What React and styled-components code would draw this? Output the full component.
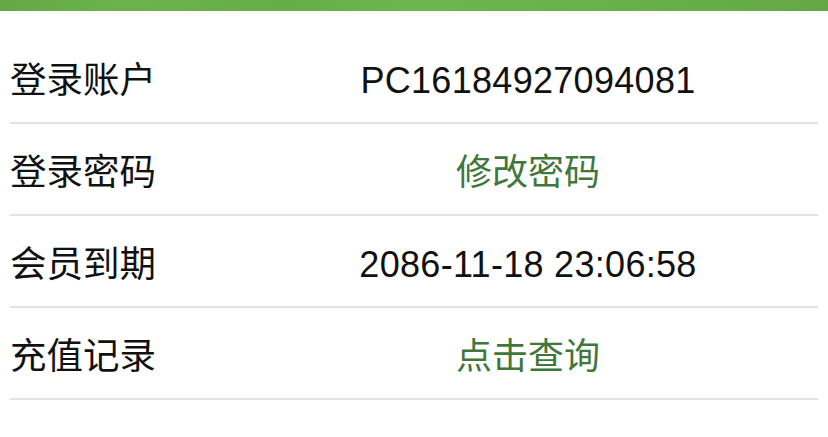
import React from "react";
import styled, { createGlobalStyle } from "styled-components";

const GlobalStyle = createGlobalStyle`
  html, body {
    margin: 0;
    padding: 0;
    background: #ffffff;
  }
  body {
    font-family: "Liberation Sans", "Noto Sans CJK SC", sans-serif;
  }
`;

const rows = [
  { label: "登录账户", value: "PC16184927094081" },
  { label: "登录密码", value: "修改密码", link: true },
  { label: "会员到期", value: "2086-11-18 23:06:58" },
  { label: "充值记录", value: "点击查询", link: true },
];

const App = () => {
  return (
    <Page>
      <GlobalStyle />
      <TopBar />
      <List>
        {rows.map((row, i) => (
          <Row key={i}>
            <Label>{row.label}</Label>
            <Value link={row.link ? 1 : 0}>{row.value}</Value>
          </Row>
        ))}
      </List>
    </Page>
  );
};

const Page = styled.div`
  width: 828px;
  height: 437px;
  overflow: hidden;
  background: #fff;
`;

const TopBar = styled.div`
  height: 11px;
  background: linear-gradient(
    100deg,
    #64a845 0%,
    #6cb34c 15%,
    #66ad47 35%,
    #6db64e 50%,
    #68b049 75%,
    #64a845 100%
  );
`;

const List = styled.div`
  display: flex;
  flex-direction: column;
  padding: 21px 10px 0 10px;
`;

const Row = styled.div`
  display: grid;
  grid-template-columns: 228px 1fr;
  align-items: center;
  height: 90px;
  border-bottom: 2px solid #e3e3e3;
`;

const Label = styled.span`
  font-size: 36.5px;
  color: #111;
  font-family: "Noto Sans CJK SC", sans-serif;
  line-height: 1;
  padding-top: 3px;
`;

const Value = styled.span`
  font-size: 36px;
  text-align: center;
  line-height: 1;
  padding-top: ${(p) => (p.link ? "8px" : "8px")};
  letter-spacing: ${(p) => (p.link ? "0" : "0.3px")};
  color: ${(p) => (p.link ? "#40773b" : "#111")};
  font-family: "Liberation Sans", "Noto Sans CJK SC", sans-serif;
`;

export default App;
